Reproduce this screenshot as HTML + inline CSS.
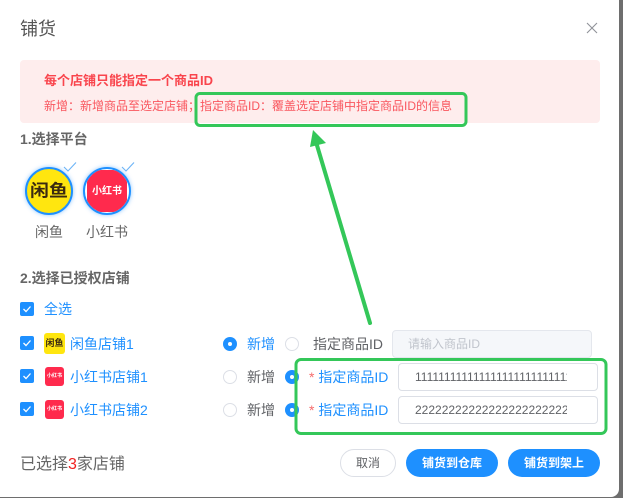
<!DOCTYPE html>
<html><head><meta charset="utf-8"><style>
html,body{margin:0;padding:0;background:#6e6e6e}
body{width:623px;height:498px;position:relative;overflow:hidden;font-family:"Liberation Sans","Noto Sans CJK SC",sans-serif;color:#606266}
#d{position:absolute;left:-8px;top:-8px;width:627px;height:505px;background:#fff;border-radius:8px}
.a{position:absolute;white-space:nowrap;line-height:20px;font-size:14px}
.b{color:#1e90ff}
.cb{position:absolute;left:20px;width:14px;height:14px;background:#1e90ff;border-radius:2px}
.cb svg{position:absolute;left:0;top:0}
.r{position:absolute;width:14px;height:14px;border-radius:50%;box-sizing:border-box}
.on{background:#1e90ff}.on:after{content:"";position:absolute;left:5px;top:5px;width:4px;height:4px;background:#fff;border-radius:50%}
.off{border:1px solid #dcdfe6;background:#fff}
.in{position:absolute;box-sizing:border-box;border:1px solid #dcdfe6;border-radius:4px;height:28px;font-size:12px;line-height:26px;padding-left:16px;overflow:hidden;white-space:nowrap;color:#606266}
.btn{position:absolute;top:449px;height:28px;border-radius:14px;font-size:12px;line-height:28px;text-align:center;font-weight:bold;color:#fff;background:#1e90ff}
.ic{position:absolute;border-radius:3px;text-align:center;font-weight:bold}
</style></head><body>
<div id="d"></div>

<div class="a" style="left:20px;top:16px;font-size:18px;line-height:26px;color:#555">铺货</div>
<svg style="position:absolute;left:586px;top:22px" width="12" height="12"><path d="M1 1L11 11M11 1L1 11" stroke="#909399" stroke-width="1.1" fill="none"/></svg>

<div style="position:absolute;left:20px;top:60px;width:580px;height:63px;background:#feeded;border-radius:4px"></div>
<div class="a" style="left:44px;top:71px;font-size:13px;font-weight:bold;color:#f9454d">每个店铺只能指定一个商品ID</div>
<div class="a" style="left:44px;top:96px;font-size:12px;color:#f9565e">新增：新增商品至选定店铺；指定商品ID：覆盖选定店铺中指定商品ID的信息</div>

<div class="a" style="left:20px;top:129px;font-weight:bold;color:#666">1.选择平台</div>

<div style="position:absolute;left:25px;top:167px;width:48px;height:48px;box-sizing:border-box;border:2px solid #1e90ff;border-radius:50%;background:#ffe60f;box-shadow:0 0 4px #1e90ff80;overflow:hidden;text-align:center;font-size:19px;line-height:46px;font-weight:bold;color:#3a2a10"><span style="display:inline-block;transform:scaleY(.9)">闲鱼</span></div>
<div style="position:absolute;left:83px;top:167px;width:48px;height:48px;box-sizing:border-box;border:2px solid #1e90ff;border-radius:50%;background:#fff;box-shadow:0 0 4px #1e90ff80;overflow:hidden">
 <div style="position:absolute;left:2px;top:1px;width:40px;height:42px;border-radius:11px;background:#ff2a4d;color:#fff;font-size:10px;font-weight:bold;line-height:43px;text-align:center">小红书</div>
</div>
<svg style="position:absolute;left:63px;top:161px" width="14" height="12"><path d="M1 6L5 10L13 1.500" stroke="#6cb4f7" stroke-width="1.100" fill="none"/></svg>
<svg style="position:absolute;left:121px;top:161px" width="14" height="12"><path d="M1 6L5 10L13 1.500" stroke="#6cb4f7" stroke-width="1.100" fill="none"/></svg>
<div class="a" style="left:35px;top:222px;color:#666">闲鱼</div>
<div class="a" style="left:86px;top:222px;color:#666">小红书</div>

<div class="a" style="left:20px;top:268px;font-weight:bold;color:#666">2.选择已授权店铺</div>

<div class="cb" style="top:302px"><svg width="14" height="14"><path d="M3.500 7L6 9.500L10.500 4.500" stroke="#fff" stroke-width="1.300" fill="none"/></svg></div>
<div class="a b" style="left:44px;top:299px">全选</div>

<div class="cb" style="top:336px"><svg width="14" height="14"><path d="M3.500 7L6 9.500L10.500 4.500" stroke="#fff" stroke-width="1.300" fill="none"/></svg></div>
<div class="ic" style="left:44px;top:333px;width:21px;height:21px;background:#ffe60f;color:#3a2a10;font-size:9px;line-height:20px">闲鱼</div>
<div class="a b" style="left:70px;top:334px">闲鱼店铺1</div>

<div class="cb" style="top:369px"><svg width="14" height="14"><path d="M3.500 7L6 9.500L10.500 4.500" stroke="#fff" stroke-width="1.300" fill="none"/></svg></div>
<div class="ic" style="left:45px;top:367px;width:19px;height:19px;background:#ff2a4d;color:#fff;font-size:5px;line-height:19px">小红书</div>
<div class="a b" style="left:70px;top:367px">小红书店铺1</div>

<div class="cb" style="top:402px"><svg width="14" height="14"><path d="M3.500 7L6 9.500L10.500 4.500" stroke="#fff" stroke-width="1.300" fill="none"/></svg></div>
<div class="ic" style="left:45px;top:400px;width:19px;height:19px;background:#ff2a4d;color:#fff;font-size:5px;line-height:19px">小红书</div>
<div class="a b" style="left:70px;top:400px">小红书店铺2</div>

<div class="r on" style="left:223px;top:337px"></div>
<div class="a b" style="left:247px;top:334px">新增</div>
<div class="r off" style="left:285px;top:337px"></div>
<div class="a" style="left:313px;top:334px">指定商品ID</div>
<div class="in" style="left:392px;top:330px;width:200px;padding-left:15px;background:#f5f7fa;border-color:#e4e7ed;color:#c0c4cc">请输入商品ID</div>

<div class="r off" style="left:223px;top:370px"></div>
<div class="a" style="left:247px;top:367px">新增</div>
<div class="r on" style="left:285px;top:370px"></div>
<div class="a" style="left:309px;top:367px"><span style="color:#f56c6c">*</span> <span class="b">指定商品ID</span></div>
<div class="in" style="left:398px;top:363px;width:200px;padding-right:30px"><div style="overflow:hidden">1111111111111111111111111111</div></div>

<div class="r off" style="left:223px;top:403px"></div>
<div class="a" style="left:247px;top:400px">新增</div>
<div class="r on" style="left:285px;top:403px"></div>
<div class="a" style="left:309px;top:400px"><span style="color:#f56c6c">*</span> <span class="b">指定商品ID</span></div>
<div class="in" style="left:398px;top:396px;width:200px;padding-right:30px"><div style="overflow:hidden">2222222222222222222222222222</div></div>

<div class="a" style="left:20px;top:455px;font-size:16px;color:#666">已选择<span style="color:#f02020">3</span>家店铺</div>
<div class="btn" style="left:340px;width:56px;box-sizing:border-box;border:1px solid #dcdfe6;background:#fff;color:#606266;line-height:26px;font-weight:normal">取消</div>
<div class="btn" style="left:406px;width:92px">铺货到仓库</div>
<div class="btn" style="left:508px;width:92px">铺货到架上</div>

<svg style="position:absolute;left:0;top:0" width="623" height="498">
 <rect x="196" y="93.500" width="270" height="32" rx="4" fill="none" stroke="#34c759" stroke-width="3"/>
 <rect x="296" y="359.500" width="310" height="74" rx="5" fill="none" stroke="#34c759" stroke-width="3"/>
 <path d="M370 323L316 142" stroke="#34c759" stroke-width="4" fill="none" stroke-linecap="round"/>
 <path d="M313 130L310 147L326 143Z" fill="#34c759"/>
</svg>
</body></html>
